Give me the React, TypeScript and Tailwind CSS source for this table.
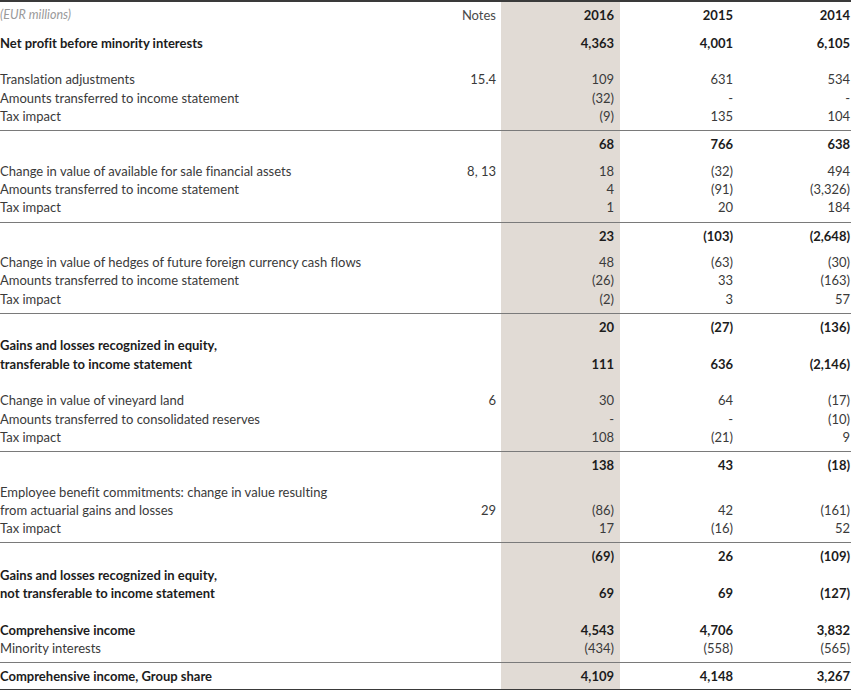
import React from 'react';

type Line = {
  label?: string[];
  notes?: string;
  v?: [string, string, string];
  bold?: boolean;
};

const font = { fontFamily: 'Lato, "Noto Sans", sans-serif' };

function Cells({ h, children }: { h: string; children?: React.ReactNode }) {
  return (
    <div className={`grid grid-cols-[400px_101px_119px_119px_112px] ${h}`}>
      {children ?? (
        <>
          <div />
          <div />
          <div className="bg-[#e1dbd5]" />
          <div />
          <div />
        </>
      )}
    </div>
  );
}

function Gap({ h }: { h: string }) {
  return <Cells h={h} />;
}

function Rule({ dark }: { dark?: boolean }) {
  return <div className={dark ? 'h-[2px] bg-[#3a3a3a]' : 'h-px bg-[#7a7a7a]'} />;
}

function Row({ label = [], notes, v, bold }: Line) {
  const txt = bold ? 'font-bold text-[#1c1c1c]' : 'text-[#3a3a3a]';
  const n = Math.max(label.length, 1);
  const rowH = n === 2 ? 'h-[36.6px]' : 'h-[18.3px]';
  return (
    <Cells h={rowH}>
      <div className={`${txt} text-[13px] leading-[18.3px] whitespace-nowrap`}>
        {label.map((l, i) => (
          <div key={i}>{l}</div>
        ))}
      </div>
      <div className="flex items-end justify-end pr-[5px] text-[13px] leading-[18.3px] text-[#3a3a3a]">
        {notes}
      </div>
      <div className={`flex items-end justify-end bg-[#e1dbd5] pr-[6px] text-[13px] leading-[18.3px] ${txt}`}>
        {v?.[0]}
      </div>
      <div className={`flex items-end justify-end pr-[6px] text-[13px] leading-[18.3px] ${txt}`}>
        {v?.[1]}
      </div>
      <div className={`flex items-end justify-end pr-[1px] text-[13px] leading-[18.3px] ${txt}`}>
        {v?.[2]}
      </div>
    </Cells>
  );
}

function Block({ rows, total }: { rows: Line[]; total: Line }) {
  return (
    <>
      {rows.map((r, i) => (
        <Row key={i} {...r} />
      ))}
      <Gap h="h-[5px]" />
      <Rule />
      <Gap h="h-[4px]" />
      <Row {...total} bold />
    </>
  );
}

export default function App() {
  return (
    <div className="w-[851px] bg-white [font-variant-ligatures:none]" style={font}>
      <Rule dark />
      <Gap h="h-[4px]" />
      <Cells h="h-[18.3px]">
        <div className="text-[12.5px] italic leading-[18.3px] text-[#9a9a9a]">(EUR millions)</div>
        <div className="flex items-end justify-end pr-[5px] text-[13px] leading-[18.3px] text-[#4a4a4a]">Notes</div>
        <div className="flex items-end justify-end bg-[#e1dbd5] pr-[6px] text-[13px] font-bold leading-[18.3px] text-[#1c1c1c]">2016</div>
        <div className="flex items-end justify-end pr-[6px] text-[13px] font-bold leading-[18.3px] text-[#1c1c1c]">2015</div>
        <div className="flex items-end justify-end pr-[1px] text-[13px] font-bold leading-[18.3px] text-[#1c1c1c]">2014</div>
      </Cells>
      <Gap h="h-[9.5px]" />
      <Row label={['Net profit before minority interests']} v={['4,363', '4,001', '6,105']} bold />
      <Gap h="h-[18.3px]" />

      <Block
        rows={[
          { label: ['Translation adjustments'], notes: '15.4', v: ['109', '631', '534'] },
          { label: ['Amounts transferred to income statement'], v: ['(32)', '-', '-'] },
          { label: ['Tax impact'], v: ['(9)', '135', '104'] },
        ]}
        total={{ v: ['68', '766', '638'] }}
      />
      <Gap h="h-[8.2px]" />

      <Block
        rows={[
          { label: ['Change in value of available for sale financial assets'], notes: '8, 13', v: ['18', '(32)', '494'] },
          { label: ['Amounts transferred to income statement'], v: ['4', '(91)', '(3,326)'] },
          { label: ['Tax impact'], v: ['1', '20', '184'] },
        ]}
        total={{ v: ['23', '(103)', '(2,648)'] }}
      />
      <Gap h="h-[8.2px]" />

      <Block
        rows={[
          { label: ['Change in value of hedges of future foreign currency cash flows'], v: ['48', '(63)', '(30)'] },
          { label: ['Amounts transferred to income statement'], v: ['(26)', '33', '(163)'] },
          { label: ['Tax impact'], v: ['(2)', '3', '57'] },
        ]}
        total={{ v: ['20', '(27)', '(136)'] }}
      />
      <Row
        label={['Gains and losses recognized in equity,', 'transferable to income statement']}
        v={['111', '636', '(2,146)']}
        bold
      />
      <Gap h="h-[18.3px]" />

      <Block
        rows={[
          { label: ['Change in value of vineyard land'], notes: '6', v: ['30', '64', '(17)'] },
          { label: ['Amounts transferred to consolidated reserves'], v: ['-', '-', '(10)'] },
          { label: ['Tax impact'], v: ['108', '(21)', '9'] },
        ]}
        total={{ v: ['138', '43', '(18)'] }}
      />
      <Gap h="h-[8.2px]" />

      <Block
        rows={[
          {
            label: ['Employee benefit commitments: change in value resulting', 'from actuarial gains and losses'],
            notes: '29',
            v: ['(86)', '42', '(161)'],
          },
          { label: ['Tax impact'], v: ['17', '(16)', '52'] },
        ]}
        total={{ v: ['(69)', '26', '(109)'] }}
      />
      <Row
        label={['Gains and losses recognized in equity,', 'not transferable to income statement']}
        v={['69', '69', '(127)']}
        bold
      />
      <Gap h="h-[18.3px]" />

      <Row label={['Comprehensive income']} v={['4,543', '4,706', '3,832']} bold />
      <Row label={['Minority interests']} v={['(434)', '(558)', '(565)']} />
      <Gap h="h-[5px]" />
      <Rule />
      <Gap h="h-[4px]" />
      <Row label={['Comprehensive income, Group share']} v={['4,109', '4,148', '3,267']} bold />
      <Gap h="h-[3px]" />
      <Rule dark />
    </div>
  );
}
